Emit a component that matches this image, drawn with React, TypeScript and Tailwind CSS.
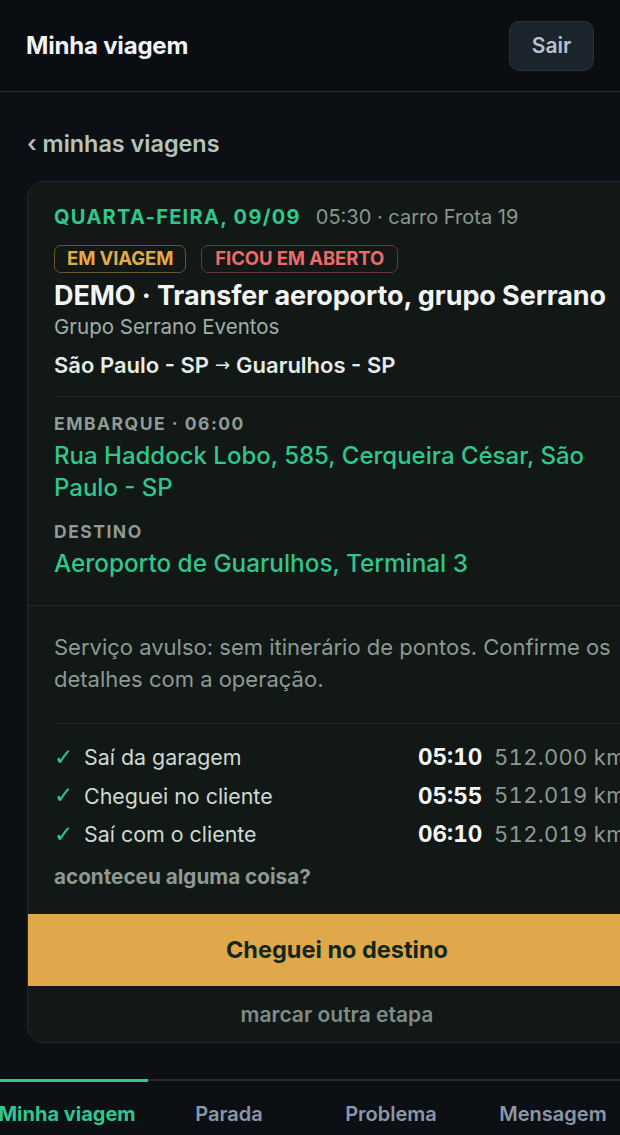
import React from "react";

const steps = [
  { label: "Saí da garagem", time: "05:10", km: "512.000 km" },
  { label: "Cheguei no cliente", time: "05:55", km: "512.019 km" },
  { label: "Saí com o cliente", time: "06:10", km: "512.019 km" },
];

const tabs = ["Minha viagem", "Parada", "Problema", "Mensagem"];

export default function App() {
  return (
    <div
      className="w-[620px] min-h-[1135px] overflow-hidden bg-[#0c1015] text-[#e8ede9]"
      style={{ fontFamily: "Inter, 'Noto Sans', sans-serif" }}
    >
      {/* Header */}
      <header className="h-[92px] flex items-center justify-between px-[26px] bg-[#0a0d12] border-b border-[#2a3038]">
        <h1 className="text-[24px] font-bold text-[#f1f4f6] tracking-[-0.2px]">Minha viagem</h1>
        <button className="h-[50px] w-[85px] rounded-[10px] bg-[#1b232d] border border-[#29323d] text-[21px] font-semibold text-[#b7c2cf]">
          Sair
        </button>
      </header>

      {/* Main */}
      <main className="pt-[38px] pl-[27px]">
        <div className="text-[23.4px] leading-[28px] font-semibold text-[#b3c4bb]">‹ minhas viagens</div>

        <section className="mt-[23px] w-[620px] shrink-0 rounded-[16px] border border-[#1f2a25] bg-[#111815] overflow-hidden">
          <div className="pt-[23px] px-[26px] pb-[26px] border-b border-[#1f2a25]">
            <div className="flex items-baseline gap-[15px] leading-[24px]">
              <span className="text-[20px] font-bold tracking-[1.3px] text-[#2fc78d]">QUARTA-FEIRA, 09/09</span>
              <span className="text-[20px] text-[#8a968f]">05:30 · carro Frota 19</span>
            </div>
            <div className="mt-[16px] flex gap-[15px]">
              <span className="h-[28px] px-[12px] flex items-center rounded-[7px] border border-[#6b5526] text-[18.5px] font-bold text-[#e3ab45] tracking-[-0.1px]">
                EM VIAGEM
              </span>
              <span className="h-[28px] px-[13px] flex items-center rounded-[7px] border border-[#6e3638] text-[18.5px] font-bold text-[#ee6a6a] tracking-[-0.1px]">
                FICOU EM ABERTO
              </span>
            </div>
            <div className="mt-[8px] text-[27px] leading-[30px] font-bold text-[#f2f5f3] tracking-[-0.1px] whitespace-nowrap">
              DEMO · Transfer aeroporto, grupo Serrano
            </div>
            <div className="mt-[3px] text-[20.5px] leading-[26px] text-[#a3aea8]">Grupo Serrano Eventos</div>
            <div className="mt-[12px] h-[26px] flex items-center gap-[6px] text-[22px] font-semibold text-[#e6ebe8] whitespace-nowrap">
              <span>São Paulo - SP</span>
              <span
                className="text-[18px] font-normal leading-none"
                style={{ fontFamily: "'DejaVu Sans', sans-serif" }}
              >
                →
              </span>
              <span>Guarulhos - SP</span>
            </div>
            <div className="mt-[18px] h-px bg-[#1f2a25]" />
            <div className="mt-[17px] text-[17.5px] leading-[20px] font-bold tracking-[1.5px] text-[#8f9b94]">
              EMBARQUE · 06:00
            </div>
            <div className="mt-[6px] text-[24px] leading-[32px] font-medium text-[#2fc78d]">
              Rua Haddock Lobo, 585, Cerqueira César, São Paulo - SP
            </div>
            <div className="mt-[18px] text-[17.5px] leading-[20px] font-bold tracking-[1.5px] text-[#8f9b94]">
              DESTINO
            </div>
            <div className="mt-[5px] text-[24.3px] leading-[32px] font-medium text-[#2fc78d]">
              Aeroporto de Guarulhos, Terminal 3
            </div>
          </div>

          <div className="pt-[25px] px-[26px] pb-[25px]">
            <p className="text-[22px] leading-[32px] text-[#8d9992]">
              Serviço avulso: sem itinerário de pontos. Confirme os detalhes com a operação.
            </p>
            <div className="mt-[28px] h-px bg-[#1f2a25]" />
            <div className="mt-[14px]">
              {steps.map((s) => (
                <div key={s.label} className="h-[38.5px] flex items-center whitespace-nowrap">
                  <span
                    className="w-[30px] text-[23px] leading-none text-[#2fc78d]"
                    style={{ fontFamily: "'DejaVu Sans', sans-serif" }}
                  >
                    ✓
                  </span>
                  <span className="flex-1 text-[21.4px] text-[#cfd8d3]">{s.label}</span>
                  <span className="w-[76px] text-[22.5px] font-bold text-[#f4f6f5] tabular-nums">{s.time}</span>
                  <span className="w-[126px] text-[22px] text-[#8d9992] tracking-[0.3px] tabular-nums">{s.km}</span>
                </div>
              ))}
            </div>
            <div className="mt-[11px] text-[20.7px] leading-[24px] font-bold text-[#8d9992]">
              aconteceu alguma coisa?
            </div>
          </div>

          <button className="w-full h-[72px] bg-[#e0a84a] text-[23.5px] font-bold text-[#13281c]">
            Cheguei no destino
          </button>
          <div className="h-[56px] pt-[2px] flex items-center justify-center text-[21px] font-semibold text-[#7f8c85]">
            marcar outra etapa
          </div>
        </section>
      </main>

      {/* Bottom nav */}
      <nav className="mt-[36px] flex justify-center">
        <div className="w-[648px] shrink-0 flex border-t-2 border-[#252b33]">
          {tabs.map((t, i) => (
            <div
              key={t}
              className={
                i === 0
                  ? "flex-1 -mt-[2px] border-t-[3px] border-[#2fc78d] h-[67px] flex items-center justify-center text-[20px] font-bold text-[#2fc78d]"
                  : "flex-1 h-[66px] flex items-center justify-center text-[20px] font-semibold text-[#8c97a8]"
              }
            >
              {t}
            </div>
          ))}
        </div>
      </nav>
    </div>
  );
}
